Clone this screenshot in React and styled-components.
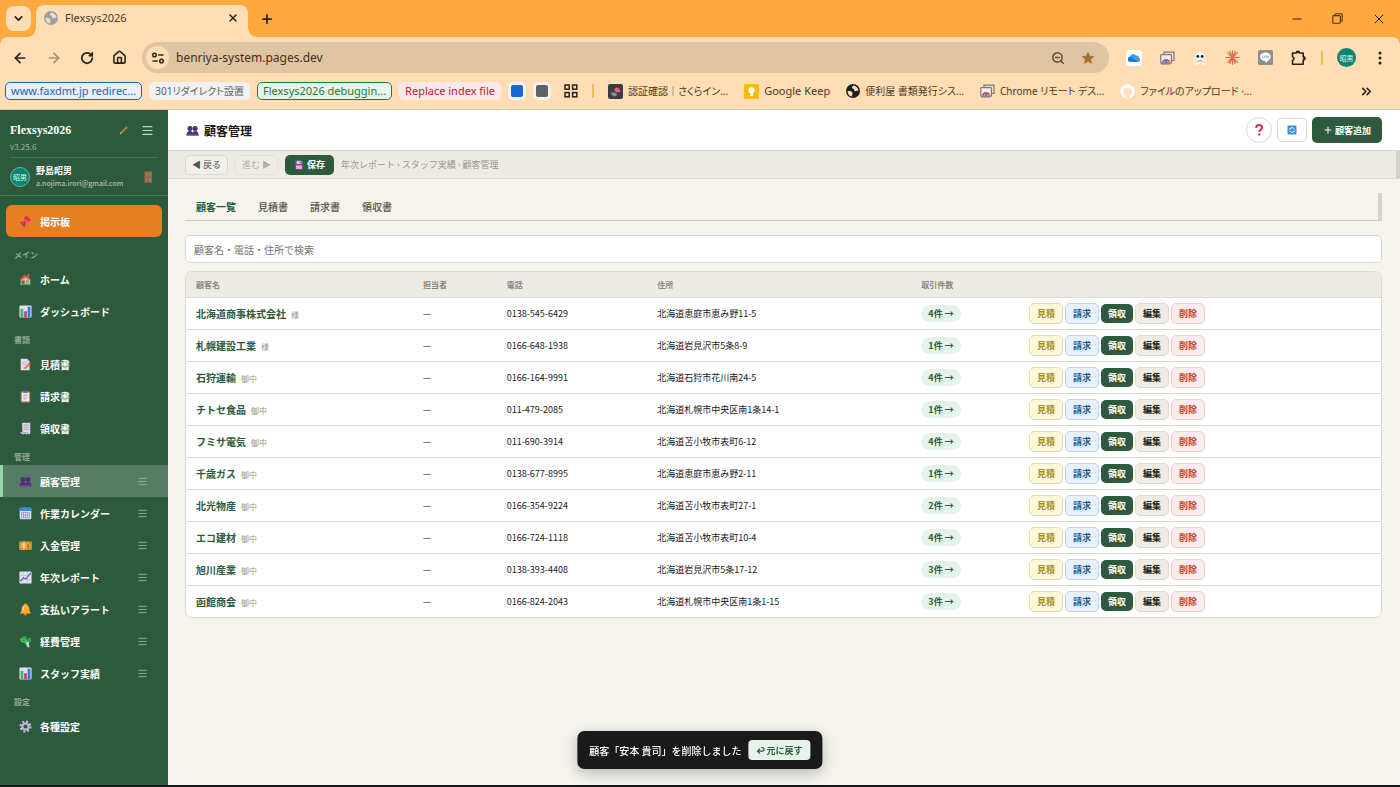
import React from "react";
import styled, { createGlobalStyle } from "styled-components";
import {
  ArrowLeft,
  ArrowRight,
  ChevronDown,
  ChevronsRight,
  House,
  Minus,
  Plus,
  RotateCw,
  X,
  ZoomOut,
} from "lucide-react";

const GlobalStyle = createGlobalStyle`
  *, *::before, *::after { box-sizing: border-box; }
  body {
    margin: 0;
    font-family: "Noto Sans CJK JP", "Noto Sans", sans-serif;
    font-size: 9px;
    color: #1a1a1a;
  }
  button, input { font: inherit; color: inherit; }
  button { padding: 0; border: 0; background: none; cursor: pointer; }
  a { color: inherit; text-decoration: none; }
  svg { display: block; flex-shrink: 0; }
`;

// ----- ICONOS DEL NAVEGADOR -----
const GlobeIcon = ({ size = 14, color = "#9aa0a6", land = "#ffddb5" }) => (
  <svg width={size} height={size} viewBox="0 0 16 16">
    <circle cx="8" cy="8" r="8" fill={color} />
    <path d="M1.8 8.2c2.2-.4 4.6.1 5.4 1.5.7 1.3-.5 1.9-.2 3.2.1.7.2 1.1.1 1.4A6.3 6.3 0 0 1 1.8 8.2z" fill={land} />
    <path d="M8.2 1.7c-.2 1.2-1.5 1.3-1.4 2.5.1 1 1.5.8 2.2 1.6.8.9 0 2.1 1.2 2.5 1.3.4 1.7-.9 2.9-.7l1.1.3A6.3 6.3 0 0 0 8.2 1.7z" fill={land} />
  </svg>
);

const TuneIcon = () => (
  <svg width="14" height="14" viewBox="0 0 14 14" fill="none" stroke="#33271a" strokeWidth="1.5">
    <circle cx="3.5" cy="4" r="1.8" />
    <path d="M7.2 4H12.5M1.5 10H6.8" />
    <circle cx="10.5" cy="10" r="1.8" />
  </svg>
);

const StarIcon = () => (
  <svg width="14" height="14" viewBox="0 0 14 14">
    <path d="M7 .6l1.9 4.2 4.6.5-3.4 3.1.9 4.5L7 10.6 3 12.900l.9-4.5L.5 5.3l4.6-.5z" fill="#a77238" />
  </svg>
);

const CloudIcon = () => (
  <svg width="16" height="16" viewBox="0 0 16 16">
    <rect width="16" height="16" rx="3" fill="#fff" />
    <path d="M4.500 11.800a2.500 2.500 0 0 1-.4-5 3.200 3.200 0 0 1 5.900-1.300 2.500 2.500 0 0 1 3 2.700 1.900 1.900 0 0 1-.4 3.600z" fill="#3b9cf0" />
    <path d="M4.500 11.800a2.500 2.500 0 1 1 2.100-3.900c1 2.200 3.200 1.500 6 3.900z" fill="#1677dd" />
  </svg>
);

const RemoteIcon = () => (
  <svg width="15" height="14" viewBox="0 0 15 14" fill="none">
    <path d="M4 3.5V1.2h10v8.300h-2.500" stroke="#74798a" strokeWidth="1.2" />
    <rect x=".8" y="3.6" width="10.6" height="8.6" rx=".6" fill="#f5f0f5" stroke="#74798a" strokeWidth="1.2" />
    <path d="M2.8 11.600a3.400 3.400 0 0 1 6.700 0" stroke="#dc4437" strokeWidth="1.7" />
    <circle cx="6.2" cy="10.7" r="1.5" fill="#4285f4" />
    <path d="M8.2 11.600l1.300-1.800.6 1.800z" fill="#f4c20d" />
    <path d="M1 13h9" stroke="#74798a" />
  </svg>
);

const SkullIcon = () => (
  <svg width="14" height="14" viewBox="0 0 14 14">
    <path d="M2 9l10 4M12 9L2 13" stroke="#f7f5f0" strokeWidth="2.2" strokeLinecap="round" />
    <path d="M7 .5c3.500 0 5.200 2 5.200 4.400 0 1.700-.8 2.700-2 3.300v2.300H3.800V8.200c-1.200-.6-2-1.600-2-3.300C1.800 2.500 3.500.5 7 .5z" fill="#fbf9f5" stroke="#d5cabb" strokeWidth=".5" />
    <circle cx="4.8" cy="5.4" r="1.4" fill="#171717" />
    <circle cx="9.2" cy="5.4" r="1.4" fill="#171717" />
    <path d="M5.500 9v1.200M7 9v1.200M8.500 9v1.200" stroke="#555" strokeWidth=".6" />
  </svg>
);

const BurstIcon = () => (
  <svg width="15" height="15" viewBox="0 0 16 16" stroke="#e2704e" strokeWidth="1.3" strokeLinecap="round">
    <path d="M8 .8v14.400M.8 8h14.400M2.900 2.900l10.200 10.200M13.100 2.900L2.900 13.100M5.100 1.500l5.800 13M10.900 1.500l-5.800 13" />
  </svg>
);

const ChatIcon = () => (
  <svg width="15" height="15" viewBox="0 0 16 16">
    <rect width="16" height="16" rx="2" fill="#8e8e8e" />
    <path d="M8 2.600c3.200 0 5.600 2 5.600 4.500 0 2.400-2.700 4.700-5.600 6.700v-2c-3.300-.1-5.600-2.100-5.600-4.700S4.800 2.600 8 2.600z" fill="#fff" />
    <path d="M4.700 6v2.300h1M7 6v2.300M8.300 8.300V6l1.300 2.300V6M11.900 6h-1v2.300h1M10.900 7.100h.9" stroke="#8e8e8e" strokeWidth=".6" fill="none" />
  </svg>
);

const PuzzleIcon = () => (
  <svg width="16" height="16" viewBox="0 0 16 16" fill="none" stroke="#2b2118" strokeWidth="1.6" strokeLinejoin="round">
    <path d="M1.500 3h3.800a1.600 1.600 0 0 1 3.200 0h3.700v3.900a1.600 1.600 0 0 1 0 3.200v4.200H1.500v-3.900a1.900 1.900 0 0 0 0-3.700z" />
    <circle cx="6.9" cy="2.3" r="1.1" fill="#2b2118" stroke="none" />
    <circle cx="13.4" cy="8.5" r="1.3" fill="#2b2118" stroke="none" />
  </svg>
);

const DotsIcon = () => (
  <svg width="4" height="14" viewBox="0 0 4 14" fill="#2b2118">
    <circle cx="2" cy="2" r="1.5" />
    <circle cx="2" cy="7" r="1.5" />
    <circle cx="2" cy="12" r="1.5" />
  </svg>
);

const RestoreIcon = () => (
  <svg width="11" height="11" viewBox="0 0 11 11" fill="none" stroke="#4a3415" strokeWidth="1.1">
    <rect x=".8" y="2.6" width="7.6" height="7.6" rx="1" />
    <path d="M2.800 2.400V1.800a1 1 0 0 1 1-1h5.400a1 1 0 0 1 1 1v5.400a1 1 0 0 1-1 1h-.6" />
  </svg>
);

const AppsIcon = () => (
  <svg width="14" height="14" viewBox="0 0 14 14" fill="none" stroke="#2b2118" strokeWidth="1.5">
    <rect x="1" y="1" width="4.2" height="4.2" />
    <rect x="8.6" y="1" width="4.2" height="4.2" />
    <rect x="1" y="8.6" width="4.2" height="4.2" />
    <rect x="8.6" y="8.6" width="4.2" height="4.2" />
  </svg>
);

const SakuraIcon = () => (
  <svg width="15" height="15" viewBox="0 0 15 15">
    <rect width="15" height="15" rx="2" fill="#3a3a3f" />
    <path d="M6.500 7a2.600 2.600 0 0 1 5-1.500 1.500 1.500 0 0 1 0 2.800H8z" fill="#ec5a82" />
    <path d="M3.200 8.500h3.600l2.300 1.700a2.600 2.600 0 0 1-5 .6 1.300 1.300 0 0 1-.9-2.300z" fill="#8a929c" />
  </svg>
);

const KeepIcon = () => (
  <svg width="15" height="15" viewBox="0 0 15 15">
    <rect width="15" height="15" rx="1.5" fill="#f7bb12" />
    <circle cx="7.5" cy="6.3" r="3.1" fill="#fff" />
    <path d="M6 8.500h3v2H6zM6 11h3v1H6z" fill="#fff" />
  </svg>
);

const GithubIcon = () => (
  <svg width="15" height="15" viewBox="0 0 15 15">
    <circle cx="7.5" cy="7.5" r="7.2" fill="#fff" />
    <path d="M5.700 14.300v-2c-1.800.3-2-.9-2.700-1.200 1 0 1.600 1 2.700.6.1-.4.3-.8.500-1-1.600-.2-3-.9-3-3.200 0-.8.300-1.400.8-1.900-.1-.4-.2-1.100.1-1.800.6 0 1.300.5 1.800.8a6 6 0 0 1 3.300 0c.4-.3 1.100-.8 1.800-.8.3.7.2 1.400.1 1.800.5.500.8 1.100.8 1.900 0 2.300-1.300 3-3 3.200.3.200.5.600.5 1.200v2.400z" fill="#ffdfbd" />
  </svg>
);

// ----- ICONOS DE LA APLICACION -----
const drawings = {
  pin: (
    <>
      <path d="M6.200 2.800l2.500-2 5.200 5-2.200 1.900-1.900.2L7 10.800l.3 2.400-1.200 1L1 8.900l1.300-1.100 2.300.3 1.800-2.600z" fill="#dc2f52" />
      <path d="M4.200 9.800L1.200 13.400" stroke="#9a8b96" strokeWidth="1" />
      <path d="M6.800 5.500L9.500 8.200" stroke="#f47b8d" strokeWidth="1.2" />
    </>
  ),
  home: (
    <>
      <path d="M9.800 1h2v4h-2z" fill="#b56a4d" />
      <path d="M2 7.200L6.500 3 13 7v6.500H2z" fill="#dcbca2" />
      <path d="M.6 8L5.500 2.300 8.400 3l5.300 4.200-1.200 1.300-5-3.700L2 9z" fill="#e0533f" />
      <path d="M3 8.600h3.400v4.900H3z" fill="#84604e" />
      <path d="M8 8.400h3.200v2.900H8z" fill="#65a9cc" />
      <path d="M1 12.400h12.600V14H1z" fill="#55a456" />
    </>
  ),
  bars: (
    <>
      <rect x=".5" y=".5" width="14" height="14" rx="1.2" fill="#e2dff0" />
      <rect x="1.8" y="4.5" width="3.2" height="9.5" fill="#3eb66b" />
      <rect x="5.9" y="7.3" width="3.2" height="6.7" fill="#d63a72" />
      <rect x="10" y="2" width="3.2" height="12" fill="#3677d3" />
    </>
  ),
  memo: (
    <>
      <path d="M2 .8h7.600l2.600 3V14H2z" fill="#e6e1ee" />
      <path d="M9.600.8v3h2.600z" fill="#aaa1bd" />
      <path d="M4 5h5M4 7.200h4.500M4 11.600h3.300" stroke="#a69bb3" strokeWidth=".8" />
      <path d="M6.500 10.600L12 5.300l1.700 1.700-5.400 5.200-2.400.7z" fill="#e8744c" />
      <path d="M11 6.300L12.200 5l1.700 1.700-1.200 1.200z" fill="#d9405e" />
    </>
  ),
  clipboard: (
    <>
      <rect x="2" y="1.3" width="11" height="13" rx="1.2" fill="#b97459" />
      <rect x="3.2" y="3" width="8.6" height="10.2" fill="#eeeaf4" />
      <rect x="5" y=".6" width="5" height="2.6" rx=".8" fill="#6d6180" />
      <path d="M4.800 5.800h5.400M4.800 8h5.400M4.800 10.200h3.800" stroke="#a79cb6" strokeWidth=".9" />
    </>
  ),
  receipt: (
    <>
      <path d="M3.500 1H13v12.300l-1.500 1-1.500-1-1.500 1-1.500-1-1.500 1-3-1V12h1.500z" fill="#dcd6e9" />
      <path d="M1.500 11.500H10v1.800H3c-1 0-1.500-.7-1.500-1.800z" fill="#b4abca" />
      <path d="M5.500 3.500h5.500M5.500 6h5.500M5.500 8.500h5.500" stroke="#9d93b2" strokeWidth=".9" />
    </>
  ),
  people: (
    <g fill="#4c3177">
      <circle cx="4.6" cy="5.2" r="2.9" />
      <circle cx="10.5" cy="5.2" r="2.9" />
      <path d="M.6 13.200c0-3.700 1.500-5 4-5s3.300 1 3.300 5zM7.300 13.200c0-3.700 1.200-5 3.500-5s3.700 1.300 3.700 5z" />
      <path d="M.5 12h14v1.300H.5z" fill="#7657a3" />
    </g>
  ),
  calendar: (
    <>
      <rect x=".8" y="1" width="13.4" height="13.2" rx="1.3" fill="#e8e6f4" />
      <path d="M.8 2.300C.8 1.500 1.300 1 2.100 1h10.800c.8 0 1.300.5 1.300 1.300v2.400H.8z" fill="#2f8de4" />
      <path d="M2.800 6.200h9.400v6.300H2.800zM5.200 6v6.500M7.500 6v6.500M9.900 6v6.500M2.800 9.300h9.400" fill="none" stroke="#8d93c1" strokeWidth=".9" />
    </>
  ),
  yen: (
    <>
      <rect x=".3" y="3" width="14.4" height="9.5" rx=".8" fill="#f2a93b" />
      <path d="M4.200 3h2.600v9.500H4.200z" fill="#f8d7a0" />
      <rect x="1.4" y="4.2" width="12.2" height="7.1" fill="none" stroke="#c77625" strokeWidth=".7" />
      <path d="M8.700 5.300l1.800 2.200 1.800-2.200M10.500 7.500v2.800M9 8.500h3" fill="none" stroke="#964f12" strokeWidth=".8" />
    </>
  ),
  trend: (
    <>
      <rect x=".5" y=".5" width="14" height="14" rx="1" fill="#e2e0ef" />
      <path d="M.5 5.200h14M.5 9.800h14M5 .5v14M9.800.5v14" stroke="#b7b4cf" strokeWidth=".6" />
      <path d="M1.500 12l3.600-4.200 2.800 1.500 5.600-7" fill="none" stroke="#5366a8" strokeWidth="1.4" />
    </>
  ),
  bell: (
    <>
      <circle cx="7.5" cy="12.7" r="1.8" fill="#d98224" />
      <path d="M7.500.7c.9 0 1.200.5 1.300 1.200 2.300.8 3.100 2.500 3.200 5.500.1 2.200.7 3 2 4.800H1c1.300-1.800 1.900-2.600 2-4.800.1-3 .9-4.700 3.200-5.500C6.300 1.200 6.600.7 7.500.7z" fill="#fbae31" />
      <path d="M5.800 3.500c-1 1.200-1 3-1.200 5" stroke="#ffe08a" strokeWidth="1.2" fill="none" />
    </>
  ),
  money: (
    <>
      <path d="M.8 4.200l6-3.200 3.300 2.800 3.700-.7.400 4.200-3 3.500L6 8.400l-3.300.7z" fill="#2fa64e" />
      <path d="M1 5.200l5.500-1 3.200 3.700 1.600 6.200-2.200-.6-1.800-3.700z" fill="#67c66a" />
      <path d="M8.600 8.300l2.200-.7 1.300 6.300-2 .3z" fill="#ded9e9" />
      <path d="M3.400 5.300l4 2.200M8.500 3.500l4 3.300" stroke="#157b35" strokeWidth="1" />
    </>
  ),
  gear: (
    <>
      <circle cx="7.5" cy="7.5" r="5.8" fill="none" stroke="#c7bedd" strokeWidth="2.2" strokeDasharray="2.3 2.255" />
      <circle cx="7.5" cy="7.5" r="3.7" fill="none" stroke="#c0b7d6" strokeWidth="2.6" />
      <circle cx="7.5" cy="7.5" r="1.7" fill="#4d456b" />
    </>
  ),
  save: (
    <>
      <path d="M1.200 1.200h11l1.600 1.600v11H1.200z" fill="#714a99" />
      <rect x="4" y="1.2" width="7" height="4.8" fill="#ddd7ed" />
      <rect x="8.3" y="2" width="1.6" height="3" fill="#59427c" />
      <rect x="3" y="8" width="9" height="5.8" fill="#f0a6ca" />
    </>
  ),
  pencil: (
    <>
      <path d="M2.200 10.500L10.500 2.300l2.300 2.300-8.300 8.200-3.200 1z" fill="#a7784c" />
      <path d="M9.700 3.200l1.200-1.300c.6-.6 2.900 1.700 2.300 2.300L12 5.500z" fill="#9c6a5c" />
      <path d="M1.900 11.400l1.900 1.900-2.500.5z" fill="#e0c09b" />
    </>
  ),
  door: (
    <>
      <rect x="3" y=".3" width="9.5" height="14.4" fill="#8d6a4b" />
      <path d="M4.500 2h2.600v4.500H4.500zM8.500 2H11v4.500H8.500zM4.500 8.500h2.600v4.500H4.500zM8.500 8.500H11v4.500H8.500z" fill="#a07a59" />
    </>
  ),
  question: (
    <>
      <path d="M4 5c0-2.600 1.500-3.700 3.600-3.700s3.700 1.200 3.700 3.300c0 2.500-3.200 2.600-3.500 5.300" fill="none" stroke="#ce2d55" strokeWidth="2.5" />
      <circle cx="7.7" cy="13" r="1.5" fill="#ce2d55" />
    </>
  ),
  refresh: (
    <>
      <rect x=".8" y=".8" width="13.4" height="13.4" rx="1.3" fill="#3a8fe0" />
      <path d="M11 6.500a3.700 3.700 0 0 0-6.800-.6M4 8.500a3.700 3.700 0 0 0 6.800.7" fill="none" stroke="#fff" strokeWidth="1.3" />
      <path d="M3.600 4.200v2.400h2.400zM11.400 10.900V8.500H9z" fill="#fff" />
    </>
  ),
};

const Emoji = ({ name, size = 13 }) => (
  <svg width={size} height={size} viewBox="0 0 15 15" aria-hidden="true">
    {drawings[name]}
  </svg>
);

const LinesIcon = ({ size = 10, color = "#8fb39a" }) => (
  <svg width={size} height={size} viewBox="0 0 10 10" stroke={color}>
    <path d="M.5 1.500h9M.5 5h9M.5 8.500h9" />
  </svg>
);

const ReturnIcon = () => (
  <svg width="9" height="9" viewBox="0 0 9 9" fill="none" stroke="#2d5a3d" strokeWidth="1.3">
    <path d="M3.500 2.800L1.200 5.200l2.300 2.400M1.400 5.200h4.400c2.500 0 2.500-3.600 0-3.600H5" />
  </svg>
);

// ----- DATOS -----
const sections = [
  {
    title: "メイン",
    items: [
      { icon: "home", label: "ホーム" },
      { icon: "bars", label: "ダッシュボード" },
    ],
  },
  {
    title: "書類",
    items: [
      { icon: "memo", label: "見積書" },
      { icon: "clipboard", label: "請求書" },
      { icon: "receipt", label: "領収書" },
    ],
  },
  {
    title: "管理",
    items: [
      { icon: "people", label: "顧客管理", sortable: true, active: true },
      { icon: "calendar", label: "作業カレンダー", sortable: true },
      { icon: "yen", label: "入金管理", sortable: true },
      { icon: "trend", label: "年次レポート", sortable: true },
      { icon: "bell", label: "支払いアラート", sortable: true },
      { icon: "money", label: "経費管理", sortable: true },
      { icon: "bars", label: "スタッフ実績", sortable: true },
    ],
  },
  { title: "設定", items: [{ icon: "gear", label: "各種設定" }] },
];

const customers = [
  { name: "北海道商事株式会社", title: "様", tel: "0138-545-6429", address: "北海道恵庭市恵み野11-5", deals: 4 },
  { name: "札幌建設工業", title: "様", tel: "0166-648-1938", address: "北海道岩見沢市5条8-9", deals: 1 },
  { name: "石狩運輸", title: "御中", tel: "0166-164-9991", address: "北海道石狩市花川南24-5", deals: 4 },
  { name: "チトセ食品", title: "御中", tel: "011-479-2085", address: "北海道札幌市中央区南1条14-1", deals: 1 },
  { name: "フミサ電気", title: "御中", tel: "011-690-3914", address: "北海道苫小牧市表町6-12", deals: 4 },
  { name: "千歳ガス", title: "御中", tel: "0138-677-8995", address: "北海道恵庭市恵み野2-11", deals: 1 },
  { name: "北光物産", title: "御中", tel: "0166-354-9224", address: "北海道苫小牧市表町27-1", deals: 2 },
  { name: "エコ建材", title: "御中", tel: "0166-724-1118", address: "北海道苫小牧市表町10-4", deals: 4 },
  { name: "旭川産業", title: "御中", tel: "0138-393-4408", address: "北海道岩見沢市5条17-12", deals: 3 },
  { name: "函館商会", title: "御中", tel: "0166-824-2043", address: "北海道札幌市中央区南1条1-15", deals: 3 },
];

const columns = [
  { label: "顧客名", width: "19%" },
  { label: "担当者", width: "7%" },
  { label: "電話", width: "12.6%" },
  { label: "住所", width: "22.1%" },
  { label: "取引件数", width: "9%" },
  { label: "", width: "30.3%" },
];

const actions = [
  { label: "見積", tone: "yellow" },
  { label: "請求", tone: "blue" },
  { label: "領収", tone: "green" },
  { label: "編集", tone: "gray" },
  { label: "削除", tone: "red" },
];

const tones = {
  yellow: { bg: "#fdf8dc", border: "#e8dca0", color: "#b08a1a" },
  blue: { bg: "#e8f1fb", border: "#bcd3ee", color: "#245a85" },
  green: { bg: "#2d5a3d", color: "#fff" },
  gray: { bg: "#eeebe4", border: "#dedad1", color: "#1a1a1a" },
  red: { bg: "#fdecec", border: "#f3cccc", color: "#c0453c" },
};

const groups = [
  { label: "www.faxdmt.jp redirec...", color: "#2563b0", bg: "#e8f0fe", outlined: true },
  { label: "301リダイレクト設置", color: "#5f6368", bg: "#f1f1f2", jp: true },
  { label: "Flexsys2026 debuggin...", color: "#1e7a3c", bg: "#e6f4ea", outlined: true },
  { label: "Replace index file", color: "#b3262e", bg: "#fce8e8" },
];

const bookmarks = [
  { label: "認証確認｜さくらイン...", icon: <SakuraIcon />, jp: true },
  { label: "Google Keep", icon: <KeepIcon /> },
  { label: "便利屋 書類発行シス...", icon: <GlobeIcon color="#1f1f1f" />, jp: true },
  { label: "Chrome リモート デス...", icon: <RemoteIcon />, jp: true },
  { label: "ファイルのアップロード ·...", icon: <GithubIcon />, jp: true },
];

function Browser() {
  return (
    <BrowserTop>
      <TabStrip>
        <TabSearch aria-label="タブを検索">
          <ChevronDown size={13} strokeWidth={3} />
        </TabSearch>
        <BrowserTab>
          <GlobeIcon />
          <TabTitle>Flexsys2026</TabTitle>
          <IconButton aria-label="タブを閉じる">
            <X size={12} strokeWidth={3} />
          </IconButton>
        </BrowserTab>
        <IconButton aria-label="新しいタブ">
          <Plus size={14} strokeWidth={3} />
        </IconButton>
        <WindowButtons>
          <IconButton aria-label="最小化"><Minus size={14} strokeWidth={2} /></IconButton>
          <IconButton aria-label="元のサイズに戻す"><RestoreIcon /></IconButton>
          <IconButton aria-label="閉じる"><X size={16} strokeWidth={1.5} /></IconButton>
        </WindowButtons>
      </TabStrip>

      <Toolbar>
        <IconGroup>
          <IconButton aria-label="戻る"><ArrowLeft size={16} strokeWidth={2.5} /></IconButton>
          <IconButton aria-label="進む" $faded><ArrowRight size={16} strokeWidth={2.5} /></IconButton>
          <IconButton aria-label="再読み込み"><RotateCw size={14} strokeWidth={3} /></IconButton>
          <IconButton aria-label="ホーム"><House size={15} strokeWidth={2.5} /></IconButton>
        </IconGroup>
        <AddressBar>
          <SiteInfo aria-label="サイト情報"><TuneIcon /></SiteInfo>
          <AddressInput aria-label="アドレス" defaultValue="benriya-system.pages.dev" />
          <IconButton aria-label="ズーム"><ZoomOut size={14} strokeWidth={2.5} color="#5e4a33" /></IconButton>
          <IconButton aria-label="ブックマーク"><StarIcon /></IconButton>
        </AddressBar>
        <Extensions>
          <IconButton aria-label="iCloud"><CloudIcon /></IconButton>
          <IconButton aria-label="リモート デスクトップ"><RemoteIcon /></IconButton>
          <IconButton aria-label="スカル"><SkullIcon /></IconButton>
          <IconButton aria-label="アシスタント"><BurstIcon /></IconButton>
          <IconButton aria-label="チャット"><ChatIcon /></IconButton>
          <IconButton aria-label="拡張機能"><PuzzleIcon /></IconButton>
        </Extensions>
        <Separator />
        <Profile>昭男</Profile>
        <IconButton aria-label="メニュー"><DotsIcon /></IconButton>
      </Toolbar>

      <BookmarkBar>
        <Groups>
          {groups.map((g) => (
            <GroupChip key={g.label} $color={g.color} $bg={g.bg} $outlined={g.outlined} $jp={g.jp}>
              {g.label}
            </GroupChip>
          ))}
          <ColorChip aria-label="青グループ" $color="#1967d2" />
          <ColorChip aria-label="灰グループ" $color="#5f6368" />
        </Groups>
        <IconButton aria-label="アプリ"><AppsIcon /></IconButton>
        <Separator />
        <Bookmarks>
          {bookmarks.map((b) => (
            <Bookmark key={b.label} href="#" $jp={b.jp}>
              {b.icon}
              {b.label}
            </Bookmark>
          ))}
        </Bookmarks>
        <IconButton aria-label="その他のブックマーク"><ChevronsRight size={15} strokeWidth={2.5} /></IconButton>
      </BookmarkBar>
    </BrowserTop>
  );
}

function Sidebar() {
  return (
    <SidebarWrapper>
      <SidebarHead>
        <BrandRow>
          <Brand>Flexsys2026</Brand>
          <IconButton aria-label="名前を編集"><Emoji name="pencil" size={10} /></IconButton>
          <IconButton aria-label="メニューを閉じる"><LinesIcon size={11} color="#c3d4c8" /></IconButton>
        </BrandRow>
        <Version>v3.25.6</Version>
      </SidebarHead>
      <UserRow>
        <Profile $ring>昭男</Profile>
        <UserInfo>
          <UserName>野島昭男</UserName>
          <UserMail>a.nojima.irori@gmail.com</UserMail>
        </UserInfo>
        <IconButton aria-label="ログアウト"><Emoji name="door" size={12} /></IconButton>
      </UserRow>
      <BoardLink href="#">
        <Emoji name="pin" />
        掲示板
      </BoardLink>
      <nav>
        {sections.map((section) => (
          <section key={section.title}>
            <SectionTitle>{section.title}</SectionTitle>
            {section.items.map((item) => (
              <NavLink key={item.label} href="#" $active={item.active}>
                <Emoji name={item.icon} />
                <NavLabel>{item.label}</NavLabel>
                {item.sortable && <LinesIcon size={9} />}
              </NavLink>
            ))}
          </section>
        ))}
      </nav>
    </SidebarWrapper>
  );
}

function CustomerTable() {
  return (
    <TableCard>
      <Table>
        <thead>
          <tr>
            {columns.map((col) => (
              <Th key={col.label} $width={col.width}>{col.label}</Th>
            ))}
          </tr>
        </thead>
        <tbody>
          {customers.map((c) => (
            <Tr key={c.name}>
              <Td>
                <CustomerName href="#">{c.name}</CustomerName>
                <Honorific>{c.title}</Honorific>
              </Td>
              <Td>—</Td>
              <Td>{c.tel}</Td>
              <Td>{c.address}</Td>
              <Td>
                <DealBadge>{c.deals}件 →</DealBadge>
              </Td>
              <Td>
                <Actions>
                  {actions.map((a) => (
                    <ActionButton key={a.label} $tone={tones[a.tone]}>{a.label}</ActionButton>
                  ))}
                </Actions>
              </Td>
            </Tr>
          ))}
        </tbody>
      </Table>
    </TableCard>
  );
}

export default function App() {
  return (
    <Window>
      <GlobalStyle />
      <Browser />
      <Page>
        <Sidebar />
        <Main>
          <Header>
            <Emoji name="people" />
            <PageTitle>顧客管理</PageTitle>
            <HelpButton aria-label="ヘルプ"><Emoji name="question" size={12} /></HelpButton>
            <RefreshButton aria-label="更新"><Emoji name="refresh" size={10} /></RefreshButton>
            <AddButton><Plus size={10} strokeWidth={2.5} />顧客追加</AddButton>
          </Header>
          <HistoryBar>
            <HistoryButton>◀ 戻る</HistoryButton>
            <HistoryButton disabled>進む ▶</HistoryButton>
            <SaveButton><Emoji name="save" size={10} />保存</SaveButton>
            <Crumbs>年次レポート › スタッフ実績 › 顧客管理</Crumbs>
            <ScrollThumb />
          </HistoryBar>
          <Content>
            <Tabs>
              <TabButton $active>顧客一覧</TabButton>
              <TabButton>見積書</TabButton>
              <TabButton>請求書</TabButton>
              <TabButton>領収書</TabButton>
              <ScrollThumb />
            </Tabs>
            <SearchInput type="search" aria-label="顧客検索" placeholder="顧客名・電話・住所で検索" />
            <CustomerTable />
          </Content>
        </Main>
      </Page>
      <Toast role="status">
        顧客「安本 貴司」を削除しました
        <UndoButton><ReturnIcon />元に戻す</UndoButton>
      </Toast>
    </Window>
  );
}

// ----- ESTILOS: NAVEGADOR -----
const Window = styled.div`
  display: flex;
  flex-direction: column;
  min-height: 100vh;
  background: #f4f3ed;
  border-bottom: 2px solid #17181a;
`;

const BrowserTop = styled.header`
  font-family: "Noto Sans", "Noto Sans CJK JP", sans-serif;
  color: #2b2118;
  background: #ffa93f;
  border-bottom: 1px solid #d9c8ae;
`;

const TabStrip = styled.div`
  display: flex;
  align-items: center;
  height: 37px;
  padding: 0 13px 0 6px;
`;

const TabSearch = styled.button`
  display: grid;
  place-items: center;
  width: 25px;
  height: 25px;
  border-radius: 8px;
  background: #ffddb5;
`;

const BrowserTab = styled.div`
  display: flex;
  align-items: center;
  align-self: flex-end;
  gap: 7px;
  width: 212px;
  height: 32px;
  margin: 0 12px 0 5px;
  padding: 0 9px 6px 8px;
  border-radius: 8px 8px 0 0;
  background: #ffddb5;
  position: relative;

  &::before, &::after {
    content: "";
    position: absolute;
    bottom: 0;
    width: 8px;
    height: 8px;
  }
  &::before {
    right: 100%;
    background: radial-gradient(circle at 0 0, transparent 7px, #ffddb5 8px);
  }
  &::after {
    left: 100%;
    background: radial-gradient(circle at 100% 0, transparent 7px, #ffddb5 8px);
  }
`;

const TabTitle = styled.span`
  flex: 1;
  font-size: 11px;
  line-height: 16px;
  color: #4a3a28;
`;

const IconButton = styled.button`
  display: grid;
  place-items: center;
  flex-shrink: 0;
  opacity: ${(props) => (props.$faded ? 0.4 : 1)};
`;

const WindowButtons = styled.div`
  display: flex;
  gap: 28px;
  margin-left: auto;
`;

const Toolbar = styled.div`
  display: flex;
  align-items: center;
  height: 41px;
  padding: 0 18px 0 12px;
  border-radius: 8px 8px 0 0;
  background: #ffddb5;
`;

const IconGroup = styled.div`
  display: flex;
  align-items: center;
  gap: 18px;
  margin-right: 15px;
`;

const AddressBar = styled.div`
  display: flex;
  align-items: center;
  flex: 1;
  gap: 16px;
  height: 31px;
  padding: 0 14px 0 4px;
  border-radius: 16px;
  background: #dfc5a1;
`;

const SiteInfo = styled.button`
  display: grid;
  place-items: center;
  width: 23px;
  height: 23px;
  border-radius: 50%;
  background: #ffddb5;
`;

const AddressInput = styled.input`
  flex: 1;
  min-width: 0;
  margin-left: -9px;
  padding: 0;
  border: 0;
  outline: none;
  background: none;
  font-size: 12px;
  color: #3d3021;
`;

const Extensions = styled.div`
  display: flex;
  align-items: center;
  gap: 18px;
  margin-left: 17px;
`;

const Separator = styled.span`
  width: 2px;
  height: 14px;
  margin: 0 14px;
  border-radius: 1px;
  background: #f5b75a;
`;

const Profile = styled.span`
  display: grid;
  place-items: center;
  flex-shrink: 0;
  width: ${(props) => (props.$ring ? "20px" : "19px")};
  height: ${(props) => (props.$ring ? "20px" : "19px")};
  margin-right: ${(props) => (props.$ring ? "0" : "22px")};
  border: ${(props) => (props.$ring ? "1px solid #6fb39e" : "0")};
  border-radius: 50%;
  background: #0b8470;
  color: #e8f7f2;
  font-size: 7px;
`;

const BookmarkBar = styled.div`
  display: flex;
  align-items: center;
  height: 31px;
  padding: 0 26px 5px 5px;
  background: #ffddb5;
`;

const Groups = styled.div`
  display: flex;
  gap: 7px;
  margin-right: 13px;
`;

const GroupChip = styled.button`
  height: 18px;
  padding: 0 5px;
  border: 1px solid ${(props) => (props.$outlined ? props.$color : props.$bg)};
  border-radius: 5px;
  background: ${(props) => props.$bg};
  color: ${(props) => props.$color};
  font-size: ${(props) => (props.$jp ? "10px" : "11px")};
  font-feature-settings: "palt";
  line-height: 16px;
  white-space: nowrap;
`;

const ColorChip = styled.button`
  width: 18px;
  height: 18px;
  border: 3px solid #f4f1ee;
  border-radius: 5px;
  background: ${(props) => props.$color};
`;

const Bookmarks = styled.div`
  display: flex;
  flex: 1;
  gap: 16px;
`;

const Bookmark = styled.a`
  display: flex;
  align-items: center;
  gap: 5px;
  font-size: ${(props) => (props.$jp ? "10px" : "11px")};
  font-feature-settings: "palt";
  line-height: 16px;
  color: #4a3a28;
  white-space: nowrap;
`;

// ----- ESTILOS: MENU LATERAL -----
const Page = styled.div`
  display: flex;
  flex: 1;
`;

const SidebarWrapper = styled.aside`
  flex: 0 0 168px;
  background: #2d5a3d;
  color: #fff;
`;

const SidebarHead = styled.div`
  margin: 0 10px;
  padding: 12px 0 3px;
  border-bottom: 1px solid #4b725a;
`;

const BrandRow = styled.div`
  display: flex;
  align-items: center;
  gap: 13px;
  height: 16px;
  padding-right: 5px;
`;

const Brand = styled.strong`
  flex: 1;
  font-family: "Liberation Serif", serif;
  font-size: 12px;
`;

const Version = styled.div`
  margin-top: 2px;
  font-size: 8px;
  line-height: 14px;
  color: #a0b9a8;
`;

const UserRow = styled.div`
  display: flex;
  align-items: center;
  gap: 6px;
  height: 38px;
  padding: 0 14px 0 10px;
  border-bottom: 1px solid #4b725a;
`;

const UserInfo = styled.div`
  flex: 1;
  min-width: 0;
  line-height: 12px;
`;

const UserName = styled.div`
  font-size: 9px;
  font-weight: 700;
`;

const UserMail = styled.div`
  font-size: 7px;
  font-weight: 500;
  color: #a9c0b0;
  white-space: nowrap;
`;

const BoardLink = styled.a`
  display: flex;
  align-items: center;
  gap: 8px;
  height: 32px;
  margin: 9px 6px 5px;
  padding: 0 13px;
  border-radius: 6px;
  background: #e67e22;
  font-size: 10px;
  font-weight: 700;
`;

const SectionTitle = styled.h2`
  margin: 0;
  padding: 7px 14px 2px;
  font-size: 8px;
  font-weight: 700;
  line-height: 12px;
  color: #8fac98;
`;

const NavLink = styled.a`
  display: flex;
  align-items: center;
  gap: 8px;
  height: 32px;
  padding: 0 21px 0 16px;
  border-left: 3px solid ${(props) => (props.$active ? "#95d5a8" : "transparent")};
  background: ${(props) => (props.$active ? "#577b64" : "none")};
  font-size: 10px;
  font-weight: 700;
`;

const NavLabel = styled.span`
  flex: 1;
`;

// ----- ESTILOS: CONTENIDO -----
const Main = styled.main`
  flex: 1;
  min-width: 0;
`;

const Header = styled.div`
  display: flex;
  align-items: center;
  gap: 5px;
  height: 41px;
  padding: 0 18px;
  border-bottom: 1px solid #dcd8d0;
  background: #fff;
`;

const PageTitle = styled.h1`
  flex: 1;
  margin: 0;
  font-size: 12px;
  font-weight: 700;
`;

const HelpButton = styled.button`
  display: grid;
  place-items: center;
  width: 26px;
  height: 26px;
  border: 1px solid #dedad2;
  border-radius: 50%;
`;

const RefreshButton = styled(HelpButton)`
  width: 30px;
  height: 24px;
  border-radius: 5px;
`;

const AddButton = styled.button`
  display: flex;
  align-items: center;
  gap: 2px;
  height: 26px;
  padding: 0 11px;
  border-radius: 5px;
  background: #2d5a3d;
  color: #fff;
  font-size: 9px;
  font-weight: 700;
`;

const HistoryBar = styled.div`
  display: flex;
  align-items: center;
  gap: 7px;
  height: 28px;
  padding-left: 17px;
  border-bottom: 1px solid #dcd8d0;
  background: #eeebe4;
`;

const HistoryButton = styled.button`
  height: 20px;
  padding: 0 6px;
  border: 1px solid #dcd8d0;
  border-radius: 5px;
  background: #f2f0ea;
  font-size: 9px;
  line-height: 18px;
  color: #55524c;

  &:disabled {
    opacity: 0.4;
  }
`;

const SaveButton = styled.button`
  display: flex;
  align-items: center;
  gap: 3px;
  height: 20px;
  padding: 0 9px;
  border-radius: 5px;
  background: #2d5a3d;
  color: #fff;
  font-weight: 700;
`;

const Crumbs = styled.span`
  color: #99958c;
`;

const ScrollThumb = styled.span`
  align-self: stretch;
  width: 4px;
  margin-left: auto;
  background: #d6d2ca;
`;

const Content = styled.div`
  padding: 14px 18px 14px 17px;
`;

const Tabs = styled.div`
  display: flex;
  height: 28px;
  border-bottom: 1px solid #cfcbc2;
`;

const TabButton = styled.button`
  padding: 0 11px;
  font-size: 10px;
  font-weight: ${(props) => (props.$active ? 700 : 500)};
  color: ${(props) => (props.$active ? "#2d5a3d" : "#55524c")};
`;

const SearchInput = styled.input`
  display: block;
  width: 100%;
  height: 28px;
  margin: 14px 0 8px;
  padding: 0 8px;
  border: 1px solid #dedad2;
  border-radius: 5px;
  background: #fff;
  font-size: 10px;
  appearance: none;

  &::placeholder {
    color: #77736c;
  }
`;

const TableCard = styled.div`
  overflow: hidden;
  border: 1px solid #dedad2;
  border-radius: 7px;
  background: #fff;
`;

const Table = styled.table`
  width: 100%;
  table-layout: fixed;
  border-collapse: collapse;
`;

const Th = styled.th`
  width: ${(props) => props.$width};
  height: 25px;
  padding: 0 10px;
  background: #eeebe4;
  border-bottom: 1px solid #dedad2;
  font-size: 8px;
  font-weight: 700;
  text-align: left;
  color: #8a867d;
`;

const Tr = styled.tr`
  border-bottom: 1px solid #dedad2;

  &:last-child {
    border-bottom: 0;
  }
`;

const Td = styled.td`
  height: 32px;
  padding: 0 10px;
  white-space: nowrap;
`;

const CustomerName = styled.a`
  font-size: 10px;
  font-weight: 700;
  color: #2d5a3d;
`;

const Honorific = styled.span`
  margin-left: 5px;
  font-size: 8px;
  color: #99958c;
`;

const DealBadge = styled.button`
  height: 17px;
  padding: 0 7px;
  border-radius: 9px;
  background: #e6f3ea;
  color: #2d5a3d;
  font-weight: 700;
  line-height: 17px;
`;

const Actions = styled.div`
  display: flex;
  align-items: center;
  gap: 2px;
`;

const ActionButton = styled.button`
  padding: 0 7px;
  border: ${(props) => (props.$tone.border ? `1px solid ${props.$tone.border}` : "0")};
  border-radius: 5px;
  background: ${(props) => props.$tone.bg};
  color: ${(props) => props.$tone.color};
  font-size: 9px;
  font-weight: 700;
  line-height: 19px;
`;

const Toast = styled.div`
  position: fixed;
  bottom: 18px;
  left: 50%;
  transform: translateX(-50%);
  display: flex;
  align-items: center;
  gap: 7px;
  height: 38px;
  padding: 0 12px;
  border-radius: 7px;
  background: #1a1a1a;
  box-shadow: 0 4px 14px rgba(0, 0, 0, 0.25);
  color: #fff;
  font-size: 10px;
  font-weight: 500;
  white-space: nowrap;
`;

const UndoButton = styled.button`
  display: flex;
  align-items: center;
  gap: 1px;
  height: 20px;
  padding: 0 8px;
  border-radius: 4px;
  background: #e6f3ea;
  color: #2d5a3d;
  font-size: 9px;
  font-weight: 700;
`;
